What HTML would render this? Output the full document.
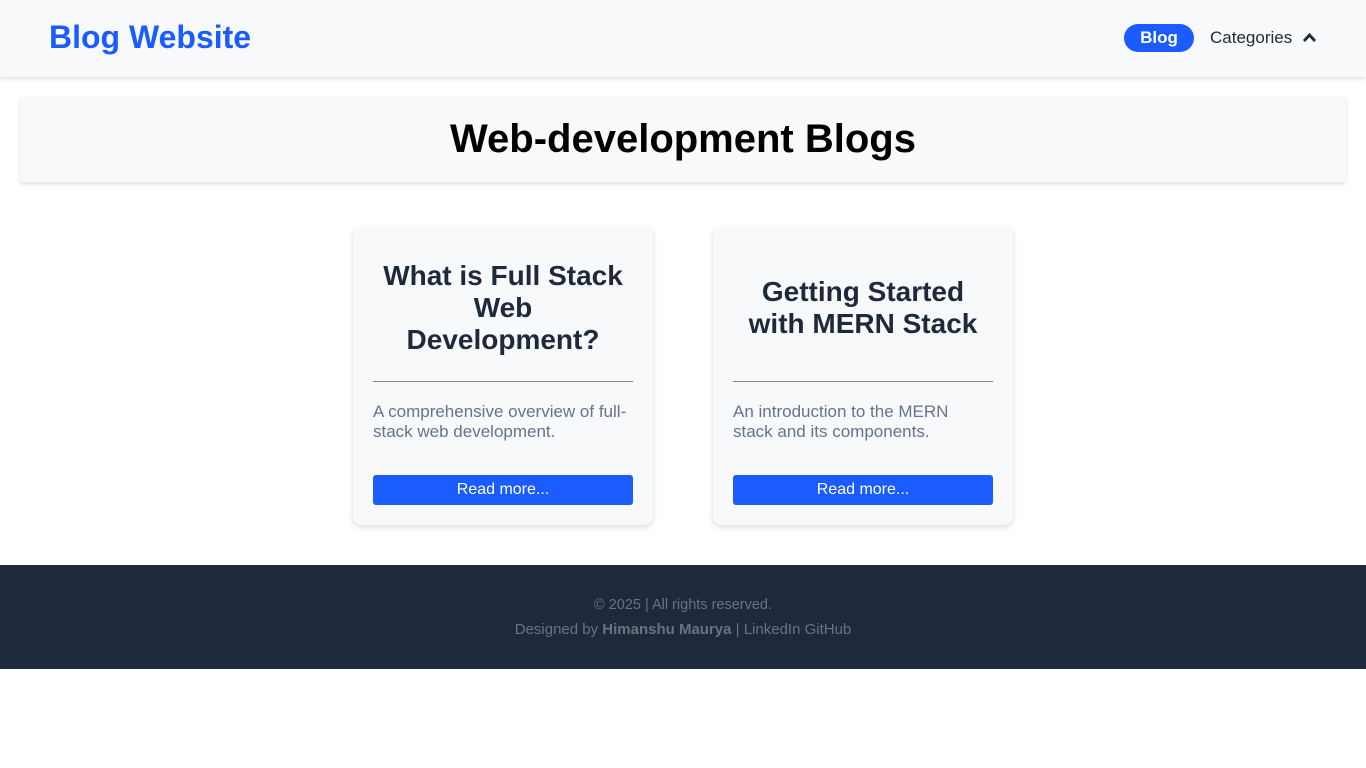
<!DOCTYPE html>
<html><head><meta charset="utf-8"><style>
*{margin:0;padding:0;box-sizing:border-box}
body{width:1366px;height:768px;background:#fff;font-family:"Liberation Sans",Arial,sans-serif;position:relative;overflow:hidden}
.nav{position:absolute;left:0;top:0;width:1366px;height:77px;background:#f8f9fb;box-shadow:0 2px 4px rgba(0,0,0,.12)}
.logo{position:absolute;left:49px;top:19px;font-size:32px;font-weight:bold;color:#1a5cff}
.blog{position:absolute;left:1124px;top:24px;width:70px;height:28px;border-radius:14px;background:#1a5cff;color:#fff;font-weight:bold;font-size:17px;text-align:center;line-height:28px}
.cat{position:absolute;left:1210px;top:28px;font-size:17px;color:#1e293b}
.chev{position:absolute;left:1302px;top:31px}
.hero{position:absolute;left:20px;top:97px;width:1326px;height:85px;background:#f8f9fb;box-shadow:0 2px 4px rgba(0,0,0,.12);text-align:center;font-size:40px;font-weight:bold;line-height:85px;color:#000}
.card{position:absolute;top:227px;width:300px;height:298px;background:#f8f9fb;border-radius:8px;box-shadow:0 2px 6px rgba(0,0,0,.15)}
.card h2{position:absolute;left:24px;width:252px;text-align:center;font-size:28px;line-height:32px;color:#1e293b}
.card hr{position:absolute;left:20px;top:154px;width:260px;border:0;border-top:1px solid #888}
.card p{position:absolute;left:20px;top:175px;width:256px;font-size:17px;line-height:20px;color:#64748b}
.card .btn{position:absolute;left:20px;top:248px;width:260px;height:30px;background:#1a5cff;border-radius:3px;color:#fff;font-size:16px;text-align:center;line-height:30px}
.foot{position:absolute;left:0;top:565px;width:1366px;height:104px;background:#1e293b;text-align:center;color:#6b7280;font-size:14.5px}
</style></head><body>
<div class="nav"><div class="logo">Blog Website</div><div class="blog">Blog</div><div class="cat">Categories</div>
<svg class="chev" width="15" height="12" viewBox="0 0 15 12"><path d="M2 10L7.5 4L13 10" stroke="#1e293b" stroke-width="2.8" fill="none"/></svg></div>
<div class="hero">Web-development Blogs</div>
<div class="card" style="left:353px"><h2 style="top:33px">What is Full Stack Web Development?</h2><hr><p>A comprehensive overview of full-stack web development.</p><div class="btn">Read more...</div></div>
<div class="card" style="left:713px"><h2 style="top:49px">Getting Started with MERN Stack</h2><hr><p>An introduction to the MERN stack and its components.</p><div class="btn">Read more...</div></div>
<div class="foot"><div style="position:absolute;top:32px;width:100%">© 2025 | All rights reserved.</div>
<div style="position:absolute;top:56px;width:100%;font-size:15px">Designed by <b>Himanshu Maurya</b> | LinkedIn GitHub</div></div>
</body></html>
